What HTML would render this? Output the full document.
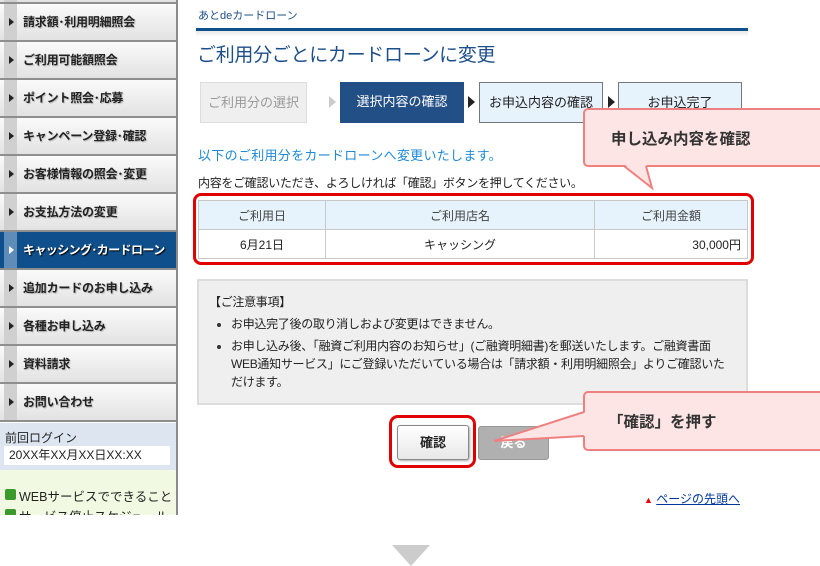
<!DOCTYPE html>
<html><head><meta charset="utf-8"><style>
*{margin:0;padding:0;box-sizing:border-box}
body{width:820px;height:566px;overflow:hidden;background:#fff;font-family:"Liberation Sans","Noto Sans CJK JP",sans-serif;position:relative;color:#222}
.a{position:absolute}
#side{left:0;top:0;width:178px;height:515px;border-right:2px solid #8a8a8a;overflow:hidden}
.mi{position:absolute;left:0;width:176px;height:38px;background:linear-gradient(#fafafa,#e2e2e2);border-bottom:2px solid #8e8e8e;font-size:12px;font-weight:bold;color:#222;line-height:36px;padding-left:23px;text-shadow:1px 1px 1px #bbb;white-space:nowrap;letter-spacing:-.2px}
.mi:before{content:"";position:absolute;left:4px;top:0;width:13px;height:36px;background:#d0d0d0}
.mi:after{content:"";position:absolute;left:9px;top:14px;border-left:5px solid #222;border-top:4px solid transparent;border-bottom:4px solid transparent}
.mi.on{background:#0f4f8c;color:#fff;text-shadow:1px 1px 1px #000}
.mi.on:before{background:#5e8dba}
.mi.on:after{border-left-color:#fff}
.step{position:absolute;top:82px;height:41px;font-size:13px;text-align:center;line-height:39px}
.arr{position:absolute;top:96px;border-left:7px solid #222;border-top:6px solid transparent;border-bottom:6px solid transparent}
table{border-collapse:collapse;position:absolute;left:198px;top:200px;width:550px;font-size:12px}
td{border:1px solid #c8c8c8;height:29px;text-align:center}
.co{position:absolute;background:#fde4e5;border:2px solid #ef8080;border-radius:5px;font-size:15px;font-weight:bold;color:#333}
.li{position:relative;padding-left:22px}
.li:before{content:"";position:absolute;left:8px;top:8px;width:4px;height:4px;border-radius:2px;background:#333}
</style></head><body>
<div id="side" class="a">
<div class="mi" style="top:-34px"></div>
<div class="mi" style="top:4px">請求額･利用明細照会</div>
<div class="mi" style="top:42px">ご利用可能額照会</div>
<div class="mi" style="top:80px">ポイント照会･応募</div>
<div class="mi" style="top:118px">キャンペーン登録･確認</div>
<div class="mi" style="top:156px">お客様情報の照会･変更</div>
<div class="mi" style="top:194px">お支払方法の変更</div>
<div class="mi on" style="top:232px;letter-spacing:-.6px">キャッシング･カードローン</div>
<div class="mi" style="top:270px">追加カードのお申し込み</div>
<div class="mi" style="top:308px">各種お申し込み</div>
<div class="mi" style="top:346px">資料請求</div>
<div class="mi" style="top:384px">お問い合わせ</div>
<div class="a" style="left:0;top:423px;width:176px;height:47px;background:#dde6f0"></div>
<div class="a" style="left:5px;top:429px;font-size:12px">前回ログイン</div>
<div class="a" style="left:4px;top:446px;width:166px;height:19px;background:#fff;font-size:12px;line-height:19px;padding-left:5px">20XX年XX月XX日XX:XX</div>
<div class="a" style="left:0;top:470px;width:176px;height:45px;background:#f1f9e2"></div>
<div class="a" style="left:5px;top:489px;width:11px;height:11px;background:#3a9a2a;border-radius:2px"></div>
<div class="a" style="left:19px;top:486px;font-size:12.5px">WEBサービスでできること</div>
<div class="a" style="left:5px;top:509px;width:11px;height:11px;background:#3a9a2a;border-radius:2px"></div>
<div class="a" style="left:19px;top:506px;font-size:12.5px">サービス停止スケジュール</div>
</div>

<div class="a" style="left:198px;top:7px;font-size:11px;color:#1d4f8a">あとdeカードローン</div>
<div class="a" style="left:196px;top:28px;width:552px;height:3px;background:#0f4f8c"></div>
<div class="a" style="left:196px;top:31px;width:552px;height:6px;background:linear-gradient(#e8e8e8,#fff)"></div>
<div class="a" style="left:197px;top:40px;font-size:19px;color:#1d4f8a;letter-spacing:-.3px">ご利用分ごとにカードローンに変更</div>

<div class="step" style="left:200px;width:107px;background:#efefef;border:1px solid #ddd;color:#999">ご利用分の選択</div>
<div class="arr" style="left:329px;border-left-color:#ccc"></div>
<div class="step" style="left:340px;width:124px;background:#234f87;color:#fff">選択内容の確認</div>
<div class="arr" style="left:468px"></div>
<div class="step" style="left:479px;width:124px;background:#e6f2fc;border:1px solid #777">お申込内容の確認</div>
<div class="arr" style="left:608px"></div>
<div class="step" style="left:618px;width:124px;background:#e6f2fc;border:1px solid #777">お申込完了</div>

<div class="a" style="left:198px;top:145px;font-size:13px;color:#1e8ad6;letter-spacing:.3px">以下のご利用分をカードローンへ変更いたします。</div>
<div class="a" style="left:198px;top:174px;font-size:12px;letter-spacing:-.3px">内容をご確認いただき、よろしければ「確認」ボタンを押してください。</div>

<div class="a" style="left:193px;top:193px;width:561px;height:72px;border:3px solid #e00000;border-radius:8px"></div>
<table><tr style="background:#e6f3fc;color:#444"><td style="width:127px">ご利用日</td><td style="width:269px">ご利用店名</td><td>ご利用金額</td></tr>
<tr><td>6月21日</td><td>キャッシング</td><td style="text-align:right;padding-right:6px">30,000円</td></tr></table>

<div class="a" style="left:197px;top:279px;width:551px;height:126px;background:#efefef;border:2px solid #ddd;font-size:12px;line-height:18px;padding:12px 10px 0 10px;letter-spacing:-.3px">
【ご注意事項】
<div class="li" style="margin-top:4px">お申込完了後の取り消しおよび変更はできません。</div>
<div class="li" style="margin-top:4px">お申し込み後、「融資ご利用内容のお知らせ」(ご融資明細書)を郵送いたします。ご融資書面WEB通知サービス」にご登録いただいている場合は「請求額・利用明細照会」よりご確認いただけます。</div>
</div>

<div class="a" style="left:478px;top:426px;width:71px;height:34px;background:#b0b0b0;border:1px solid #999;border-radius:3px;color:#fff;font-size:13px;font-weight:bold;text-align:center;line-height:32px">戻る</div>
<div class="a" style="left:389px;top:415px;width:87px;height:53px;border:3px solid #e00000;border-radius:9px"></div>
<div class="a" style="left:397px;top:425px;width:72px;height:35px;background:linear-gradient(#fff,#e8e8e8);border:1px solid #888;border-radius:3px;font-size:13px;font-weight:bold;text-align:center;line-height:33px;box-shadow:1px 1px 2px #aaa">確認</div>

<div class="a" style="left:644px;top:490px;font-size:12px;color:#00369c"><span style="color:#e00;font-size:9px">▲</span> <u>ページの先頭へ</u></div>
<div class="a" style="left:392px;top:545px;border-top:21px solid #ccc;border-left:19px solid transparent;border-right:19px solid transparent"></div>

<div class="co" style="left:583px;top:108px;width:250px;height:59px;padding:17px 0 0 26px;font-size:15.5px">申し込み内容を確認</div>
<svg class="a" style="left:0;top:0" width="820" height="566">
<polygon points="624,164 652,188 646,164" fill="#fde4e5"/>
<polyline points="624,166 652,188 646,166" fill="none" stroke="#ef8080" stroke-width="2"/>
</svg>
<div class="co" style="left:583px;top:391px;width:250px;height:60px;padding:17px 0 0 23px;font-size:15.5px">「確認」を押す</div>
<svg class="a" style="left:0;top:0" width="820" height="566">
<polygon points="586,412 494,441 586,436" fill="#fde4e5"/>
<polyline points="584,412 494,441 584,436" fill="none" stroke="#ef8080" stroke-width="2"/>
</svg>
</body></html>
